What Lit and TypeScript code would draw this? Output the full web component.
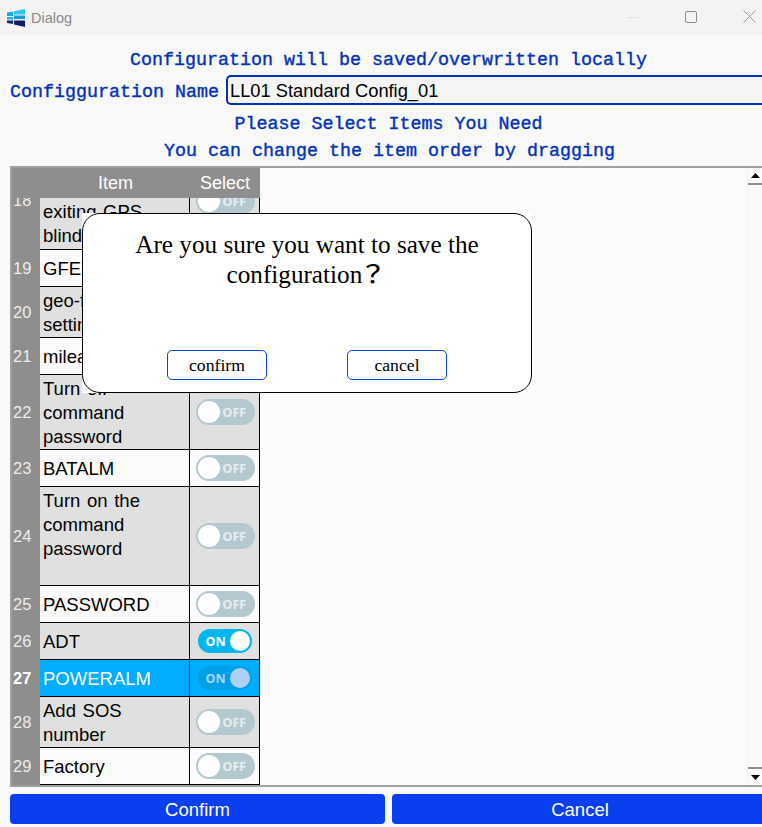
import { LitElement, html, css, svg } from "lit";
import { customElement } from "lit/decorators.js";

interface Row {
  n: number;
  lines: string[];
  h: number;
  on?: boolean;
  sel?: boolean;
}

const rows: Row[] = [
  { n: 18, lines: ["exiting GPS", "blind"], h: 52 },
  { n: 19, lines: ["GFE"], h: 37 },
  { n: 20, lines: ["geo-fence", "setting"], h: 51 },
  { n: 21, lines: ["mileage"], h: 37 },
  { n: 22, lines: ["Turn off", "command", "password"], h: 75 },
  { n: 23, lines: ["BATALM"], h: 37 },
  { n: 24, lines: ["Turn on the", "command", "password"], h: 99 },
  { n: 25, lines: ["PASSWORD"], h: 37 },
  { n: 26, lines: ["ADT"], h: 37, on: true },
  { n: 27, lines: ["POWERALM"], h: 37, on: true, sel: true },
  { n: 28, lines: ["Add SOS", "number"], h: 51 },
  { n: 29, lines: ["Factory"], h: 37 },
];

@customElement("app-root")
export class AppRoot extends LitElement {
  static styles = css`
    :host {
      display: block;
      width: 762px;
      height: 827px;
      overflow: hidden;
      position: relative;
      background: #f9f9f9;
      font-family: "Liberation Sans", Arial, sans-serif;
    }
    .titlebar {
      height: 35px;
      background: #f3f3f3;
      display: flex;
      align-items: center;
      color: #8a8a8a;
      font-size: 14.5px;
    }
    .logo { margin-left: 7px; margin-right: 6px; display: block; }
    .title { flex: 1; }
    .win { display: block; margin-bottom: 2px; }
    .win.min { margin-right: 46px; }
    .win.max { margin-right: 46px; }
    .win.close { margin-right: 6px; }
    .body {
      display: flex;
      flex-direction: column;
      height: 792px;
    }
    .mono {
      font-family: "Liberation Mono", "DejaVu Sans Mono", monospace;
      font-weight: 400;
      -webkit-text-stroke: 0.4px #0433b8;
      font-size: 18.33px;
      color: #0433b8;
      line-height: 27px;
      white-space: pre;
      text-align: center;
    }
    .l1 { margin-top: 12px; height: 27px; padding-left: 15px; }
    .name {
      display: flex;
      align-items: center;
      height: 32px;
      padding-left: 10px;
    }
    .name .mono { margin-right: 7px; padding-top: 4px; }
    .input {
      flex: 1;
      height: 26px;
      border: 2px solid #0433b8;
      border-right: none;
      border-radius: 5px 0 0 5px;
      font-size: 18.3px;
      line-height: 28px;
      padding-left: 2px;
      color: #000;
      background: #f5f5f5;
    }
    .l3 { height: 27px; margin-top: 5px; padding-left: 15px; }
    .l4 { height: 27px; padding-left: 17px; margin-bottom: 1px; }
    .frame {
      height: 617px;
      flex: none;
      margin-left: 10px;
      border: solid #a0a0a0;
      border-width: 2px 0 2px 2px;
      display: flex;
      position: relative;
      background: #fbfbfb;
      overflow: hidden;
    }
    .table { width: 248px; font-size: 18.5px; word-spacing: 1.5px; color: #000; }
    .hdr {
      display: grid;
      grid-template-columns: 178px 70px;
      height: 30px;
      background: #8e8e8e;
      color: #fff;
      font-size: 18px;
      line-height: 30px;
      text-align: center;
    }
    .hdr span:first-child { padding-left: 29px; }
    .row {
      display: grid;
      grid-template-columns: 28px 150px 70px;
      background: #fbfbfb;
      box-sizing: border-box;
      overflow: hidden;
    }
    .row.alt { background: #e0e0e0; }
    .row.sel { background: #00adff; color: #fff; }
    .num {
      background: #8e8e8e;
      color: #ececec;
      font-size: 16.5px;
      display: flex;
      align-items: center;
      justify-content: flex-start;
      padding-left: 1px;
      box-sizing: border-box;
    }
    .num.cut { align-items: flex-start; }
    .num.cut span { margin-top: -7px; }
    .row.sel .num { font-weight: 700; color: #fff; }
    .item {
      border-bottom: 1px solid #000;
      border-right: 1px solid #000;
      padding-left: 3px;
      padding-top: 2px;
      line-height: 24px;
      display: flex;
      flex-direction: column;
      justify-content: center;
      overflow: hidden;
      white-space: nowrap;
    }
    .item.top { justify-content: flex-start; }
    .item.end { justify-content: flex-end; padding-bottom: 1px; }
    .sw {
      border-bottom: 1px solid #000;
      border-right: 1px solid #000;
      display: flex;
      align-items: center;
      justify-content: center;
    }
    .sw.cut { align-items: flex-start; overflow: hidden; }
    .sw.cut .off { margin-top: -10px; }
    .off, .on {
      display: flex;
      align-items: center;
      box-sizing: border-box;
      font-size: 12.5px;
      font-weight: 700;
      word-spacing: 0;
      font-family: "Noto Sans", "Liberation Sans", sans-serif;
    }
    .off {
      width: 59px;
      height: 26px;
      border-radius: 13px;
      background: #b4c8d0;
      color: #e6eef1;
      padding: 2px;
      margin-left: 1px;
    }
    .off i {
      width: 22px;
      height: 22px;
      border-radius: 50%;
      background: #fff;
      margin-right: 3px;
      display: block;
    }
    .on {
      width: 54px;
      height: 24px;
      border-radius: 12px;
      background: #00b7f1;
      color: #fff;
      padding: 2px 2px 2px 8px;
      justify-content: space-between;
    }
    .on i {
      width: 20px;
      height: 20px;
      border-radius: 50%;
      background: #fff;
      display: block;
    }
    .row.sel .on { background: #00a0e8; color: #a8d8f4; }
    .row.sel .on i { background: #aed0f4; }
    .spacer { flex: 1; }
    .bar {
      width: 14px;
      display: flex;
      flex-direction: column;
      justify-content: space-between;
      background: #fafafa;
      border-left: 1px solid #f4f4f4;
    }
    .bar b {
      display: flex;
      align-items: center;
      justify-content: center;
      box-sizing: border-box;
      background: #fcfcfc;
    }
    .bar b.up { height: 17px; border-bottom: 2px solid #8e8e8e; }
    .bar b.down { height: 18px; border-top: 2px solid #8e8e8e; }
    .actions {
      display: flex;
      gap: 7px;
      padding-left: 10px;
      margin-top: 7px;
    }
    .btn {
      height: 30px;
      flex: none;
      background: #0a3ff0;
      color: #fff;
      font-size: 18.5px;
      line-height: 31px;
      text-align: center;
      border-radius: 4px;
    }
    .btn.a { width: 375px; }
    .btn.b { width: 376px; }
    .dialog {
      position: absolute;
      left: 82px;
      top: 213px;
      width: 450px;
      height: 180px;
      background: #fff;
    }
    .panel {
      box-sizing: border-box;
      height: 100%;
      border: 1px solid #000;
      border-radius: 18px;
      display: flex;
      flex-direction: column;
      font-family: "Liberation Serif", "Times New Roman", serif;
      color: #000;
    }
    .msg {
      font-size: 25.2px;
      line-height: 30px;
      text-align: center;
      margin-top: 16px;
      padding: 0 40px;
      height: 120px;
      box-sizing: border-box;
    }
    .msg .q {
      display: inline-block;
      font-family: "Noto Sans CJK SC", sans-serif;
      line-height: 0;
      font-size: 25.2px;
      font-weight: 400;
      transform: translateX(3px) scaleX(1.25);
      transform-origin: left center;
    }
    .dbtns { display: flex; padding-left: 84px; gap: 80px; }
    .dbtn {
      width: 100px;
      height: 30px;
      box-sizing: border-box;
      border: 1px solid #0a46d8;
      border-radius: 5px;
      font-size: 17.7px;
      line-height: 29px;
      text-align: center;
    }
  `;

  private renderRow(r: Row, i: number) {
    const alt = r.n % 2 === 0;
    const cls = `row${alt ? " alt" : ""}${r.sel ? " sel" : ""}`;
    const first = i === 0;
    const itemCls = `item${first ? " end" : ""}${r.n === 24 || r.n === 22 ? " top" : ""}`;
    return html`<div class=${cls} style="height:${r.h}px">
      <div class="num${first ? " cut" : ""}"><span>${r.n}</span></div>
      <div class=${itemCls}>${r.lines.map((l) => html`<div>${l}</div>`)}</div>
      <div class="sw${first ? " cut" : ""}">
        ${r.on
          ? html`<div class="on"><span>ON</span><i></i></div>`
          : html`<div class="off"><i></i><span>OFF</span></div>`}
      </div>
    </div>`;
  }

  render() {
    return html`
      <div class="titlebar">
        <svg class="logo" width="18" height="18" viewBox="0 0 18 18">
          <path d="M0 3.500L6 2.500V7H0z" fill="#1fa8e0" />
          <path d="M0 8H6v2.500H0z" fill="#19b8e6" />
          <path d="M0 11.500H6V15L0 14z" fill="#0a2a78" />
          <path d="M7 2.300L18 0V5.500H7z" fill="#2cc8ea" />
          <path d="M7 6.500H18V10H7z" fill="#159ad8" />
          <path d="M7 11.500H18V18L7 15.500z" fill="#0a1f6e" />
        </svg>
        <span class="title">Dialog</span>
        <svg class="win min" width="12" height="12" viewBox="0 0 12 12">
          <path d="M0 6.500h12" stroke="#e2e2e2" stroke-width="1" />
        </svg>
        <svg class="win max" width="12" height="12" viewBox="0 0 12 12">
          <rect x="0.500" y="0.500" width="11" height="11" rx="1.500" fill="none" stroke="#8c8c8c" />
        </svg>
        <svg class="win close" width="13" height="13" viewBox="0 0 13 13">
          <path d="M0.500 0.500l12 12M12.500 0.500l-12 12" stroke="#9a9a9a" stroke-width="1" />
        </svg>
      </div>
      <div class="body">
        <div class="mono l1">Configuration will be saved/overwritten locally</div>
        <div class="name">
          <div class="mono">Configguration Name</div>
          <div class="input">LL01 Standard Config_01</div>
        </div>
        <div class="mono l3">Please Select Items You Need</div>
        <div class="mono l4">You can change the item order by dragging</div>
        <div class="frame">
          <div class="table">
            <div class="hdr"><span>Item</span><span>Select</span></div>
            ${rows.map((r, i) => this.renderRow(r, i))}
          </div>
          <div class="spacer"></div>
          <div class="bar">
            <b class="up">${svg`<svg width="9" height="5" viewBox="0 0 9 5"><path d="M4.500 0L9 5H0z" fill="#000"/></svg>`}</b>
            <b class="down">${svg`<svg width="9" height="5" viewBox="0 0 9 5"><path d="M0 0h9L4.500 5z" fill="#000"/></svg>`}</b>
          </div>
        </div>
        <div class="actions">
          <div class="btn a">Confirm</div>
          <div class="btn b">Cancel</div>
        </div>
      </div>
      <div class="dialog">
        <div class="panel">
          <div class="msg">Are you sure you want to save the configuration<span class="q">？</span></div>
          <div class="dbtns">
            <div class="dbtn">confirm</div>
            <div class="dbtn">cancel</div>
          </div>
        </div>
      </div>
    `;
  }
}
